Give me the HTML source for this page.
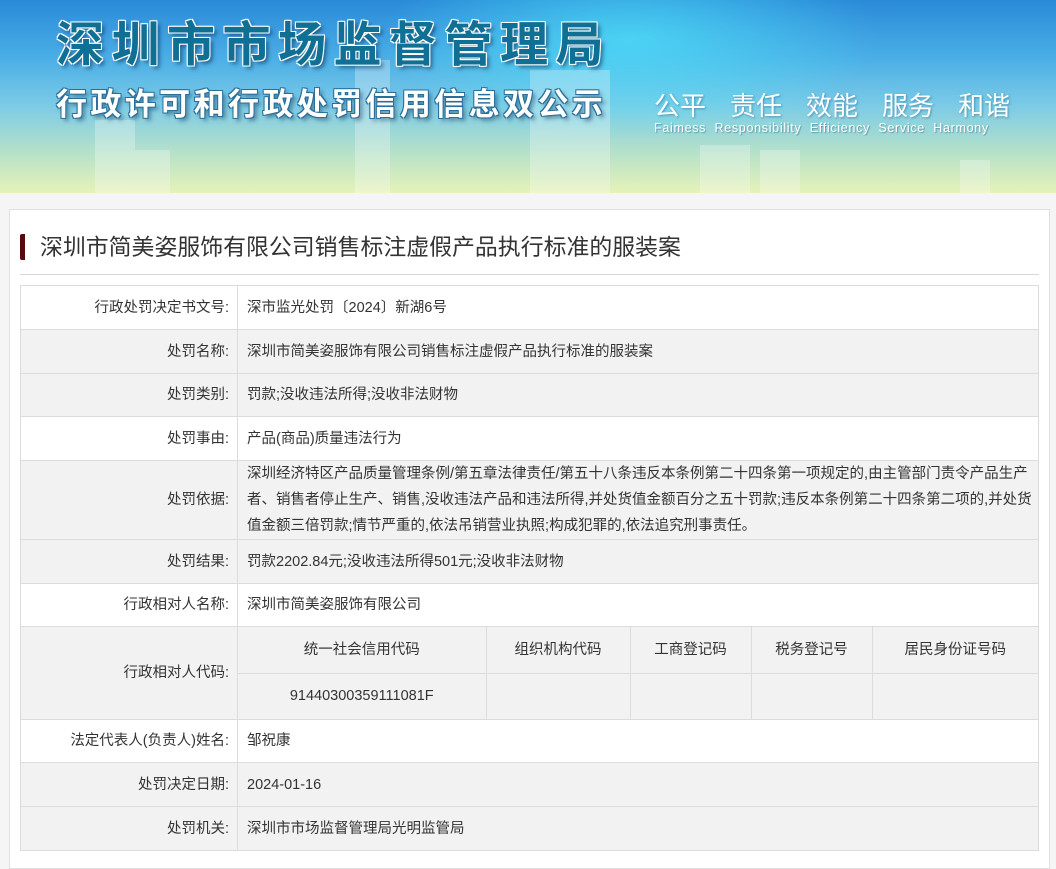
<!DOCTYPE html>
<html><head><meta charset="utf-8"><style>
*{margin:0;padding:0;box-sizing:border-box}
body{width:1056px;height:857px;overflow:hidden;background:#f5f5f5;font-family:"Liberation Sans","Noto Sans CJK SC",sans-serif;color:#333}
.banner{position:absolute;left:0;top:0;width:1056px;height:193px;overflow:hidden;
background:linear-gradient(180deg,#2a8ad8 0%,#4aaee6 30%,#7ccbe6 55%,#b8e2c8 80%,#e6f2b8 100%)}
.glow{position:absolute;left:380px;top:-60px;width:500px;height:200px;background:radial-gradient(ellipse at center,rgba(80,230,250,.7),rgba(80,230,250,0) 70%)}
.bld{position:absolute;background:rgba(255,255,255,.28)}
.t1{position:absolute;left:56px;top:10px;font-size:48px;line-height:60px;font-weight:bold;color:#0f6f95;font-family:"Noto Sans CJK SC",sans-serif;
text-shadow:0 0 2px #fff,1px 1px 0 #fff,-1px -1px 0 #fff,1px -1px 0 #fff,-1px 1px 0 #fff,3px 3px 4px rgba(0,40,80,.6);white-space:nowrap}
.t1 span{display:inline-block;width:55.5px}
.t2{position:absolute;left:56px;top:80px;font-size:31px;line-height:44px;font-weight:bold;color:#fff;font-family:"Noto Sans CJK SC",sans-serif;
text-shadow:1px 1px 0 #2a6f9a,-1px -1px 0 #2a6f9a,1px -1px 0 #2a6f9a,-1px 1px 0 #2a6f9a,3px 3px 4px rgba(0,40,80,.5);white-space:nowrap}
.t2 span{display:inline-block;width:34.4px}
.t3{position:absolute;left:654px;top:86px;font-size:26px;color:#fff;white-space:nowrap;font-family:"Noto Sans CJK SC",sans-serif;text-shadow:1px 1px 2px rgba(0,60,100,.4)}
.t3 span{margin-right:24px}
.t4{position:absolute;left:654px;top:121px;font-size:12.5px;color:#fff;white-space:nowrap;letter-spacing:.7px;text-shadow:1px 1px 1px rgba(0,60,100,.4)}
.panel{position:absolute;left:9px;top:209px;width:1041px;height:660px;background:#fff;border:1px solid #e0e0e0}
.title{position:absolute;left:20px;top:234px;height:26px;border-left:5px solid #5a0a0a;border-radius:2px;padding-left:15px;font-size:22.9px;line-height:26px;color:#333;white-space:nowrap}
.hr{position:absolute;left:20px;top:274px;width:1019px;height:1px;background:#d8d8d8}
table{position:absolute;left:20px;top:285px;width:1019px;border-collapse:collapse;font-size:14.5px;color:#333}
td{border:1px solid #dcdcdc;padding:0 9px;line-height:24px}
td.l{width:217px;text-align:right;padding-right:8px}
.g td{background:#f2f2f2}
.inner{position:static;width:100%;border:none}
.inner td{text-align:center;background:#f2f2f2}
</style></head><body>
<div class="banner">
<div class="glow"></div>
<div class="bld" style="left:95px;top:120px;width:40px;height:73px"></div>
<div class="bld" style="left:135px;top:150px;width:35px;height:43px"></div>
<div class="bld" style="left:355px;top:60px;width:35px;height:133px"></div>
<div class="bld" style="left:530px;top:70px;width:80px;height:123px"></div>
<div class="bld" style="left:700px;top:145px;width:50px;height:48px"></div>
<div class="bld" style="left:760px;top:150px;width:40px;height:43px"></div>
<div class="bld" style="left:960px;top:160px;width:30px;height:33px"></div>
<div class="t1"><span>深</span><span>圳</span><span>市</span><span>市</span><span>场</span><span>监</span><span>督</span><span>管</span><span>理</span><span>局</span></div>
<div class="t2"><span>行</span><span>政</span><span>许</span><span>可</span><span>和</span><span>行</span><span>政</span><span>处</span><span>罚</span><span>信</span><span>用</span><span>信</span><span>息</span><span>双</span><span>公</span><span>示</span></div>
<div class="t3"><span>公平</span><span>责任</span><span>效能</span><span>服务</span>和谐</div>
<div class="t4">Faimess&nbsp; Responsibility&nbsp; Efficiency&nbsp; Service&nbsp; Harmony</div>
</div>
<div class="panel"></div>
<div class="title">深圳市简美姿服饰有限公司销售标注虚假产品执行标准的服装案</div>
<div class="hr"></div>
<table>
<tr style="height:44px"><td class="l">行政处罚决定书文号:</td><td>深市监光处罚〔2024〕新湖6号</td></tr>
<tr class="g" style="height:44px"><td class="l">处罚名称:</td><td>深圳市简美姿服饰有限公司销售标注虚假产品执行标准的服装案</td></tr>
<tr class="g" style="height:43px"><td class="l">处罚类别:</td><td>罚款;没收违法所得;没收非法财物</td></tr>
<tr style="height:44px"><td class="l">处罚事由:</td><td>产品(商品)质量违法行为</td></tr>
<tr class="g" style="height:79px"><td class="l">处罚依据:</td><td style="line-height:26px;padding-right:4px">深圳经济特区产品质量管理条例/第五章法律责任/第五十八条违反本条例第二十四条第一项规定的,由主管部门责令产品生产者、销售者停止生产、销售,没收违法产品和违法所得,并处货值金额百分之五十罚款;违反本条例第二十四条第二项的,并处货值金额三倍罚款;情节严重的,依法吊销营业执照;构成犯罪的,依法追究刑事责任。</td></tr>
<tr class="g" style="height:44px"><td class="l">处罚结果:</td><td>罚款2202.84元;没收违法所得501元;没收非法财物</td></tr>
<tr style="height:43px"><td class="l">行政相对人名称:</td><td>深圳市简美姿服饰有限公司</td></tr>
<tr class="g"><td class="l">行政相对人代码:</td><td style="padding:0;border:1px solid #dcdcdc">
<table class="inner"><tr style="height:46px"><td style="width:248px;border-left:none;border-top:none">统一社会信用代码</td><td style="width:144px;border-top:none">组织机构代码</td><td style="width:121px;border-top:none">工商登记码</td><td style="width:121px;border-top:none">税务登记号</td><td style="border-top:none;border-right:none">居民身份证号码</td></tr>
<tr style="height:46px"><td style="border-left:none;border-bottom:none">91440300359111081F</td><td style="border-bottom:none"></td><td style="border-bottom:none"></td><td style="border-bottom:none"></td><td style="border-bottom:none;border-right:none"></td></tr></table></td></tr>
<tr style="height:43px"><td class="l">法定代表人(负责人)姓名:</td><td>邹祝康</td></tr>
<tr class="g" style="height:44px"><td class="l">处罚决定日期:</td><td>2024-01-16</td></tr>
<tr class="g" style="height:44px"><td class="l">处罚机关:</td><td>深圳市市场监督管理局光明监管局</td></tr>
</table>
</body></html>
